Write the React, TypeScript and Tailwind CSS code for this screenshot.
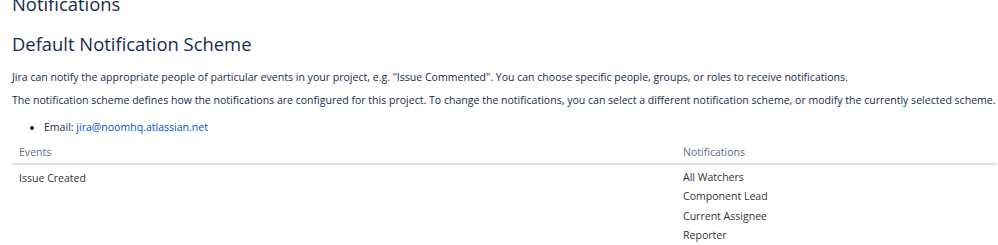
const notifications = ['All Watchers', 'Component Lead', 'Current Assignee', 'Reporter']

export default function App() {
  return (
    <div className="w-[998px] h-[245px] overflow-hidden bg-white pl-3 pr-px font-['Open_Sans',sans-serif] text-[#172b4d]">
      <h1 className="-mt-[8px] text-[18.4px] leading-6 font-medium">Notifications</h1>
      <h2 className="mt-4 text-[18.4px] leading-6 font-medium">Default Notification Scheme</h2>

      <p className="mt-[11px] text-[10.55px] leading-5">
        Jira can notify the appropriate people of particular events in your project, e.g. "Issue Commented". You can choose specific people, groups, or roles to receive notifications.
      </p>
      <p className="mt-[3px] text-[10.55px] leading-5">
        The notification scheme defines how the notifications are configured for this project. To change the notifications, you can select a different notification scheme, or modify the currently selected scheme.
      </p>
      <ul className="mt-[7px] list-disc pl-8 text-[10.55px] leading-5">
        <li>
          Email: <a className="text-[#0052cc]">jira@noomhq.atlassian.net</a>
        </li>
      </ul>

      <table className="w-full border-collapse text-[10.55px] leading-5">
        <thead>
          <tr className="border-b-2 border-[#dfe1e6]">
            <th className="w-[664px] px-[7px] pt-[5px] pb-px text-left font-normal text-[#5e6c84]">Events</th>
            <th className="px-[7px] pt-[5px] pb-px text-left font-normal text-[#5e6c84]">Notifications</th>
          </tr>
        </thead>
        <tbody>
          <tr className="align-top text-[#333333]">
            <td className="px-[7px] pt-[3px]">Issue Created</td>
            <td className="px-[7px] pt-[3px]">
              <ul>
                {notifications.map((n) => (
                  <li key={n} className="leading-[19.33px]">{n}</li>
                ))}
              </ul>
            </td>
          </tr>
        </tbody>
      </table>
    </div>
  )
}
